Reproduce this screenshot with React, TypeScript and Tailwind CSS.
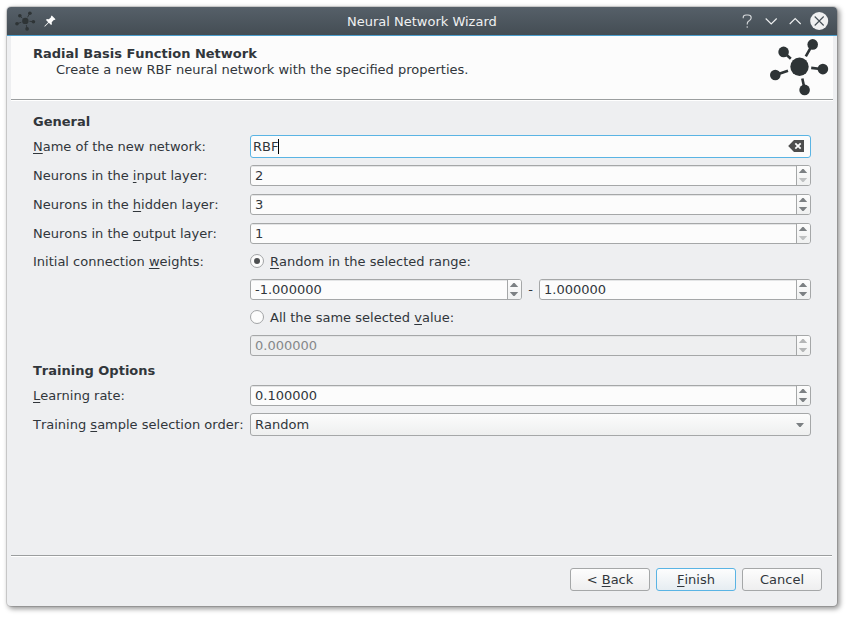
import type { ReactNode } from "react";

function Key({ children }: { children: ReactNode }) {
  return (
    <span className="underline decoration-[1px] underline-offset-[2px] [text-decoration-skip-ink:none]">
      {children}
    </span>
  );
}

function NetworkIcon({ className }: { className: string }) {
  return (
    <svg viewBox="0 0 60 58" className={className} fill="#2e3436" stroke="#2e3436">
      <g strokeWidth="2.6">
        <path d="M42.5 6.5L35.8 18.4M14 14.5L20.8 20.8M5.5 37L18 32.7M53 31.2L41.2 29.9M34.8 52L32.3 40.5" />
      </g>
      <g stroke="none">
        <circle cx="29.5" cy="28.8" r="9.2" />
        <circle cx="42.7" cy="6.4" r="5.3" />
        <circle cx="13.6" cy="13.9" r="5.3" />
        <circle cx="5.3" cy="37" r="5.3" />
        <circle cx="52.9" cy="31.1" r="5.3" />
        <circle cx="34.6" cy="51.9" r="5.3" />
      </g>
    </svg>
  );
}

type SpinProps = { value: string; up?: string; down?: string; disabled?: boolean; className?: string };

function SpinBox({ value, up = "#7c8083", down = "#7c8083", disabled = false, className = "w-[561px]" }: SpinProps) {
  return (
    <div
      className={`flex h-[21px] overflow-hidden rounded-[3px] border border-[#a5a7a8] ${className} ${
        disabled ? "bg-[#eeeff0] text-[#85888a]" : "bg-[#fcfcfc]"
      }`}
    >
      <div className="flex-1 pl-1 pt-[2px] shadow-[inset_0_1px_0_#e4e5e6]">{value}</div>
      <div className="w-[14px] border-l border-[#a5a7a8] bg-linear-to-b from-[#fcfcfc] to-[#f0f1f1]">
        <svg viewBox="0 0 13 19" className="block h-[19px] w-[13px]">
          <path d="M1.8 7L5.4 3H6.6L10.2 7Z" fill={up} />
          <path d="M1.8 12H10.2L6.6 16H5.4Z" fill={down} />
        </svg>
      </div>
    </div>
  );
}

function Radio({ checked = false }: { checked?: boolean }) {
  return (
    <span className="flex h-[14px] w-[14px] items-center justify-center rounded-full border border-[#a2a4a6] bg-[#fcfcfc]">
      {checked && <span className="h-[6px] w-[6px] rounded-full bg-[#4d4f51]" />}
    </span>
  );
}

function Row({ label, children, className }: { label: ReactNode; children: ReactNode; className: string }) {
  return (
    <div className={`flex items-center ${className}`}>
      <div className="w-[217px] shrink-0">{label}</div>
      {children}
    </div>
  );
}

function Button({ children, primary = false }: { children: ReactNode; primary?: boolean }) {
  return (
    <button
      className={`flex h-[23px] w-[80px] items-center justify-center rounded-[3px] border bg-linear-to-b from-[#fdfdfd] ${
        primary ? "border-[#5ab4e4] to-[#e6edf2]" : "border-[#a5a7a8] to-[#eeeeef]"
      }`}
    >
      <span>{children}</span>
    </button>
  );
}

export default function App() {
  return (
    <div className="h-[619px] w-[850px] overflow-hidden bg-white pl-[7px] pt-[7px] font-['DejaVu_Sans',sans-serif] text-[13px] leading-[15px] text-[#31363b] [font-kerning:none]">
      <div className="flex h-[599px] w-[830px] flex-col rounded-[4px] bg-[#eeeff1] shadow-[0_0_0_1px_rgba(0,0,0,0.12),2px_2px_5px_1px_rgba(0,0,0,0.4)]">
        <header className="flex h-[29px] shrink-0 items-center rounded-t-[4px] border-b border-[#4a9dcc] bg-linear-to-b from-[#566069] to-[#444d54]">
          <NetworkIcon className="ml-2 h-5 w-[21px]" />
          <svg viewBox="0 0 12 12" className="ml-[8px] h-3 w-3" fill="#fcfcfc">
            <path d="M7.8 0.5L11.5 4.2L10.5 5.1L9.8 5L7.7 7.2L7.9 9.3L7.1 10L4.8 7.8L1 11.4L0.3 11.6L0.5 10.9L4.2 7.2L2 4.9L2.8 4.1L4.8 4.3L7 2.2L6.9 1.4Z" />
          </svg>
          <h1 className="ml-[291px] w-[151px] whitespace-nowrap text-[#eff0f1] [font-kerning:normal]">Neural Network Wizard</h1>
          <svg viewBox="0 0 90 20" className="ml-[243px] h-5 w-[90px]" fill="none" stroke="#eff0f1" strokeWidth="1.1">
            <path d="M2.2 7.2V6.5Q2.2 4 5 4H7Q10.2 4 10.2 6.7Q10.2 8 8.7 9.4L7.2 10.5Q6.2 11.2 6.2 13.5M6.2 15.2V16.7" strokeOpacity="0.85" />
            <path d="M24.7 7.5L30.2 13L35.7 7.5M48.7 13L54.2 7.5L59.7 13" />
            <circle cx="78.2" cy="10" r="9" fill="#eff0f1" stroke="none" />
            <path d="M73.7 5.5L82.7 14.5M82.7 5.5L73.7 14.5" stroke="#465057" />
          </svg>
        </header>

        <section className="ml-1 mr-1 flex h-[65px] shrink-0 justify-between border-b border-white bg-[#fcfcfc] shadow-[inset_0_-1px_0_#9b9e9f]">
          <div className="pl-[22px] pt-[10px]">
            <h2 className="h-4 font-bold">Radial Basis Function Network</h2>
            <p className="pl-[23px] [font-kerning:normal]">Create a new RBF neural network with the specified properties.</p>
          </div>
          <NetworkIcon className="mr-[3px] mt-[2px] h-[58px] w-[60px]" />
        </section>

        <main className="flex-1 pl-[26px] pt-[13px]">
          <h3 className="h-[21px] font-bold">General</h3>
          <Row className="h-[23px]" label={<><Key>N</Key>ame of the new network:</>}>
            <div className="flex h-[23px] w-[561px] items-center justify-between rounded-[3px] border border-[#5ab4e4] bg-[#fcfcfc] pl-[2px] pr-[6px]">
              <span className="flex items-center">
                RBF<span className="h-[15px] w-px bg-black" />
              </span>
              <svg viewBox="0 0 16 12" className="mb-px h-3 w-4">
                <path d="M0.2 6L6 0H16V12H6Z" fill="#4d4d4d" />
                <path d="M7.3 3.3L12.7 8.7M12.7 3.3L7.3 8.7" stroke="#fcfcfc" strokeWidth="1.8" />
              </svg>
            </div>
          </Row>
          <Row className="mt-[7px] h-[21px]" label={<>Neurons in the <Key>i</Key>nput layer:</>}>
            <SpinBox value="2" down="#bfc1c2" />
          </Row>
          <Row className="mt-2 h-[21px]" label={<>Neurons in the <Key>h</Key>idden layer:</>}>
            <SpinBox value="3" />
          </Row>
          <Row className="mt-2 h-[21px]" label={<>Neurons in the <Key>o</Key>utput layer:</>}>
            <SpinBox value="1" down="#bfc1c2" />
          </Row>
          <Row className="mt-[10px] h-[15px]" label={<>Initial connection <Key>w</Key>eights:</>}>
            <label className="flex h-[15px] items-start gap-[6px]">
              <Radio checked />
              <span><Key>R</Key>andom in the selected range:</span>
            </label>
          </Row>
          <div className="ml-[217px] mt-[10px] flex h-[21px] w-[561px] items-center justify-between">
            <SpinBox value="-1.000000" className="w-[272px]" />
            <span>-</span>
            <SpinBox value="1.000000" className="w-[272px]" />
          </div>
          <label className="ml-[217px] mt-[10px] flex h-[15px] items-start gap-[6px]">
            <Radio />
            <span>All the same selected <Key>v</Key>alue:</span>
          </label>
          <div className="ml-[217px] mt-[10px]">
            <SpinBox value="0.000000" disabled up="#b4b6b7" down="#b4b6b7" />
          </div>
          <h3 className="mt-[7px] h-[22px] font-bold">Training Options</h3>
          <Row className="h-[21px]" label={<><Key>L</Key>earning rate:</>}>
            <SpinBox value="0.100000" />
          </Row>
          <Row className="mt-[7px] h-[23px]" label={<>Training <Key>s</Key>ample selection order:</>}>
            <div className="flex h-[23px] w-[561px] items-center justify-between rounded-[3px] border border-[#a5a7a8] bg-linear-to-b from-[#fcfcfc] to-[#eeefef] pl-1 pr-[6px]">
              Random
              <svg viewBox="0 0 8 4" className="mt-px h-1 w-2" fill="#7c8083">
                <path d="M0 0H8L4.6 4H3.4Z" />
              </svg>
            </div>
          </Row>
        </main>

        <footer className="ml-1 mr-[5px] h-[51px] shrink-0 border-t border-[#9b9e9f]">
          <div className="flex justify-end gap-[6px] border-t border-white pr-[10px] pt-[11px]">
            <Button>&lt; <Key>B</Key>ack</Button>
            <Button primary><Key>F</Key>inish</Button>
            <Button>Cancel</Button>
          </div>
        </footer>
      </div>
    </div>
  );
}
